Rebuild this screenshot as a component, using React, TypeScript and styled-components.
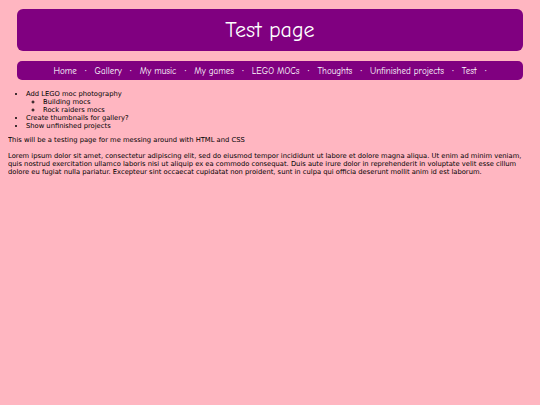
import React from "react";
import styled, { createGlobalStyle } from "styled-components";

const Global = createGlobalStyle`
  html, body { background: #ffb6c1; }
  body { margin: 8px; font-family: "DejaVu Sans", Verdana, sans-serif; font-size: 6.75px; color: #000; }
`;

const Header = styled.header`
  background: #800080;
  border-radius: 6px;
  margin: 1px 9px 0;
  height: 42px;
  display: flex;
  align-items: center;
  justify-content: center;
`;

const Title = styled.h1`
  margin: 0;
  color: #fff;
  font-family: "Comic Sans MS", "Comic Neue", cursive;
  font-weight: normal;
  font-size: 22px;
`;

const Nav = styled.nav`
  background: #800080;
  border-radius: 5px;
  margin: 10px 9px 0;
  height: 19px;
  display: flex;
  align-items: center;
  justify-content: center;
  gap: 8px;
  font-family: "Comic Sans MS", "Comic Neue", cursive;
  font-size: 9px;
  color: #fff;
`;

const NavLink = styled.a`
  color: #fff;
  text-decoration: none;
`;

const Dot = styled.span`
  color: #fff;
  font-size: 6px;
`;

const List = styled.ul<{ $nested?: boolean }>`
  margin: ${(p) => (p.$nested ? "0" : "10px 0 0")};
  padding-left: ${(p) => (p.$nested ? "17px" : "18px")};
  line-height: 8px;
  list-style-type: ${(p) => (p.$nested ? "circle" : "disc")};
`;

const Para = styled.p<{ $first?: boolean }>`
  margin: ${(p) => (p.$first ? "6px" : "8px")} 0 0;
  line-height: 8px;
`;

const links = ["Home", "Gallery", "My music", "My games", "LEGO MOCs", "Thoughts", "Unfinished projects", "Test"];

export default function App() {
  return (
    <>
      <Global />
      <Header>
        <Title>Test page</Title>
      </Header>
      <Nav>
        {links.map((l) => (
          <React.Fragment key={l}>
            <NavLink href="#">{l}</NavLink>
            <Dot>•</Dot>
          </React.Fragment>
        ))}
      </Nav>
      <List>
        <li>
          Add LEGO moc photography
          <List $nested>
            <li>Building mocs</li>
            <li>Rock raiders mocs</li>
          </List>
        </li>
        <li>Create thumbnails for gallery?</li>
        <li>Show unfinished projects</li>
      </List>
      <Para $first>This will be a testing page for me messing around with HTML and CSS</Para>
      <Para>
        Lorem ipsum dolor sit amet, consectetur adipiscing elit, sed do eiusmod tempor incididunt ut labore et dolore magna aliqua. Ut enim ad minim veniam, quis nostrud exercitation ullamco laboris nisi ut aliquip ex ea commodo consequat. Duis aute irure dolor in reprehenderit in voluptate velit esse cillum dolore eu fugiat nulla pariatur. Excepteur sint occaecat cupidatat non proident, sunt in culpa qui officia deserunt mollit anim id est laborum.
      </Para>
    </>
  );
}
